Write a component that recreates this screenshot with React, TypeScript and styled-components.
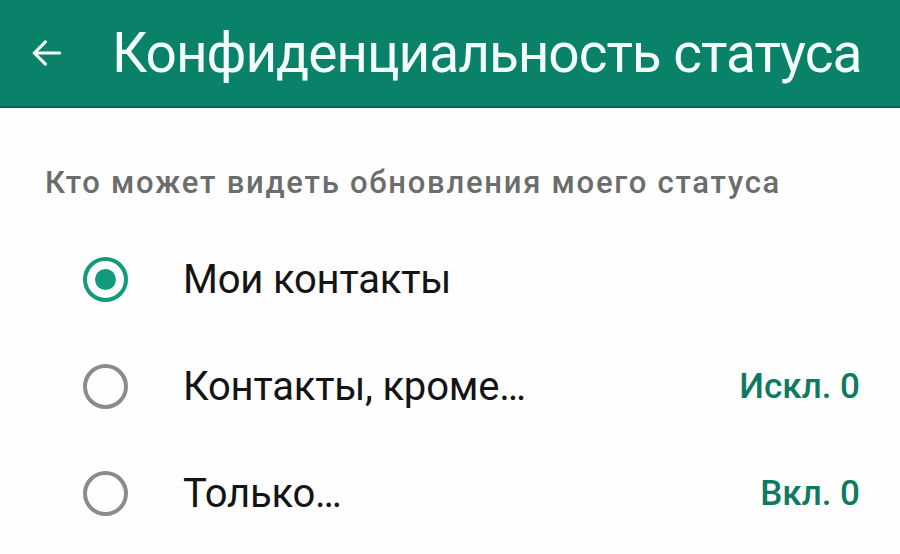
import React, { useState } from 'react'
import styled, { createGlobalStyle } from 'styled-components'

const GlobalStyle = createGlobalStyle`
  html, body {
    margin: 0;
    padding: 0;
    background: #fefefe;
    font-family: Roboto, "Noto Sans", sans-serif;
  }
`

const Page = styled.div`
  width: 900px;
  height: 554px;
  overflow: hidden;
  background: #fefefe;
`

const TopBar = styled.header`
  height: 108px;
  background: #0a8169;
  border-bottom: 2px solid #066650;
  box-sizing: border-box;
  display: flex;
  align-items: center;
  padding-left: 28px;
  gap: 46px;
`

const BackButton = styled.button`
  border: 0;
  background: none;
  padding: 0;
  display: flex;
  color: #f4fffb;
`

const Title = styled.h1`
  margin: 0;
  color: #f2fffb;
  font-size: 55px;
  font-weight: 400;
  letter-spacing: -1.05px;
  white-space: nowrap;
`

const Section = styled.section`
  padding: 56px 40px 0 45px;
`

const Caption = styled.div`
  color: #6a6d6c;
  font-size: 31px;
  font-weight: 500;
  letter-spacing: 1.75px;
  white-space: nowrap;
  margin-bottom: 52px;
`

const List = styled.div`
  display: flex;
  flex-direction: column;
  gap: 55px;
`

const Row = styled.label`
  display: flex;
  align-items: center;
  height: 52px;
  cursor: pointer;
`

const Radio = styled.span<{ $checked: boolean }>`
  width: 45px;
  height: 45px;
  box-sizing: border-box;
  border-radius: 50%;
  border: 4px solid ${p => (p.$checked ? '#139a7c' : '#8a8c8b')};
  display: flex;
  align-items: center;
  justify-content: center;
  margin-left: 38px;
  margin-right: 55px;
  &::after {
    content: '';
    width: 21px;
    height: 21px;
    border-radius: 50%;
    background: ${p => (p.$checked ? '#139a7c' : 'transparent')};
  }
`

const Label = styled.span`
  flex: 1;
  color: #141414;
  font-size: 40px;
  font-weight: 400;
  letter-spacing: -0.2px;
`

const Count = styled.span`
  color: #0f7a62;
  font-size: 35px;
  font-weight: 500;
`

const options = [
  { id: 'contacts', label: 'Мои контакты', count: '' },
  { id: 'except', label: 'Контакты, кроме…', count: 'Искл. 0' },
  { id: 'only', label: 'Только…', count: 'Вкл. 0' },
]

export default function App() {
  const [selected, setSelected] = useState('contacts')
  return (
    <Page>
      <GlobalStyle />
      <TopBar>
        <BackButton aria-label="Назад">
          <svg width="38" height="38" viewBox="0 0 24 24" fill="none" stroke="currentColor" strokeWidth="2" strokeLinecap="round" strokeLinejoin="round">
            <path d="M20 12H4" />
            <path d="M11 5l-7 7 7 7" />
          </svg>
        </BackButton>
        <Title>Конфиденциальность статуса</Title>
      </TopBar>
      <Section>
        <Caption>Кто может видеть обновления моего статуса</Caption>
        <List>
          {options.map(o => (
            <Row key={o.id} onClick={() => setSelected(o.id)}>
              <Radio $checked={selected === o.id} />
              <Label>{o.label}</Label>
              {o.count && <Count>{o.count}</Count>}
            </Row>
          ))}
        </List>
      </Section>
    </Page>
  )
}
